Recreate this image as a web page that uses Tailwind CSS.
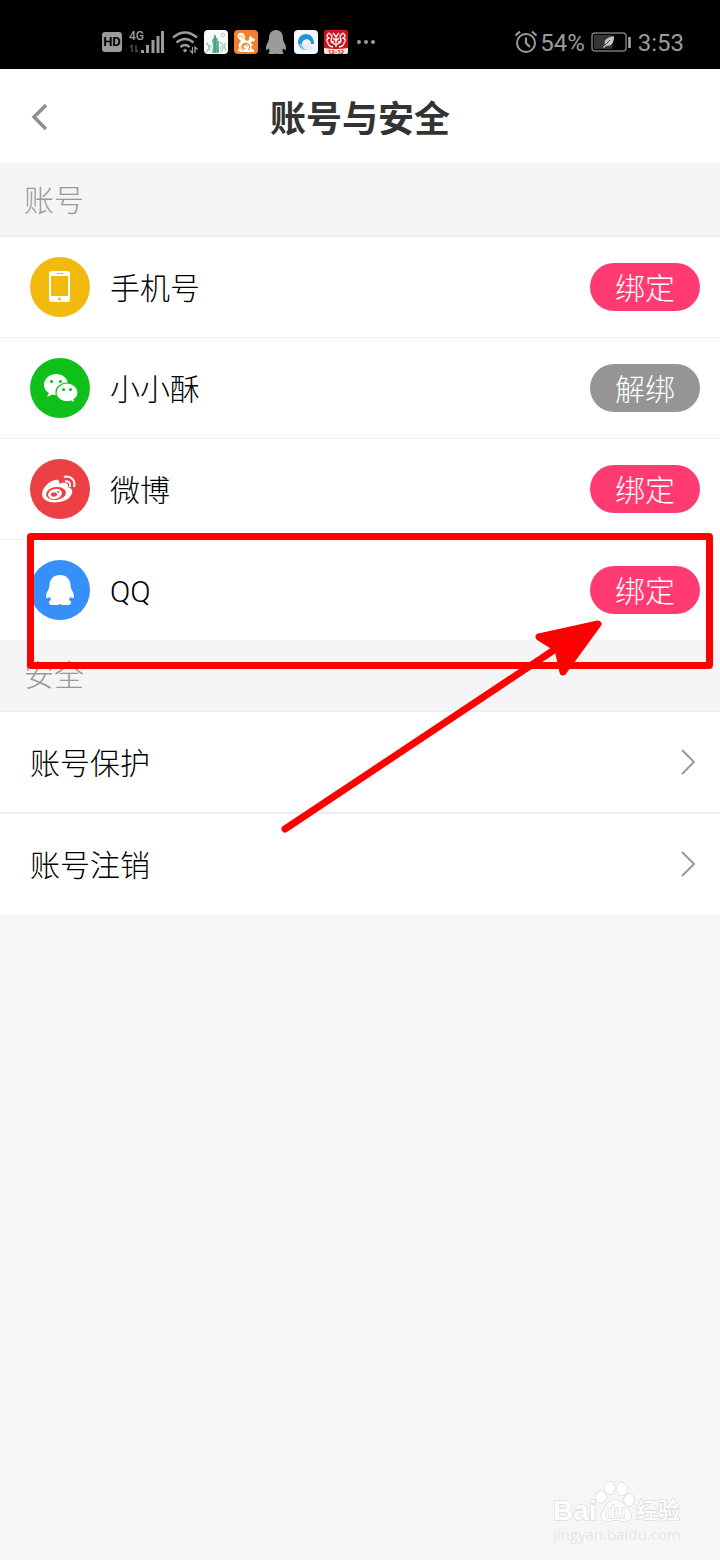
<!DOCTYPE html>
<html lang="zh-CN">
<head>
    <meta charset="utf-8">
    <meta name="viewport" content="width=device-width, initial-scale=1">
    <title>账号与安全</title>
    <script src="https://cdn.jsdelivr.net/npm/@tailwindcss/browser@4"></script>
</head>
<body class="relative min-h-screen bg-[#f6f6f6] font-['Roboto','Noto_Sans_CJK_SC',sans-serif] text-black">
    <!-- status bar -->
    <div class="flex h-[69px] items-center justify-between bg-black pt-[14px] pr-9 pl-[102px] text-[#9b9b9b]">
        <div class="flex items-center gap-[6px]">
            <div class="flex h-5 w-5 items-center justify-center rounded-[3px] bg-[#9b9b9b] text-[13px] font-bold text-black">HD</div>
            <svg class="h-6 w-[38px]" viewBox="0 0 38 24" fill="currentColor">
                <text x="1" y="10" font-size="12" font-weight="500">4G</text>
                <path d="M13 20h3v3h-3zM18 15h3v8h-3zM23.500 10h3v13h-3zM28.500 6h3v17h-3zM33 1h3v22h-3z"/>
                <path d="M4 15v7M2 17l2-2M8 15v7M8 22l2-2" stroke="#4a4a4a" stroke-width="1.500" fill="none"/>
            </svg>
            <svg class="h-6 w-[26px]" viewBox="0 0 26 24" fill="none" stroke="currentColor" stroke-width="2.400">
                <path d="M1 7.500q12-10 24 0M4.500 12.500q8.500-7 17 0M8.500 17q4.500-4 9 0"/>
                <circle cx="13" cy="20.500" r="1.300" fill="currentColor" stroke-width="1"/>
                <path d="M20.500 17v6l-2.500-2.500M23 23v-6l2.500 2.500" stroke-width="1.300"/>
            </svg>
            <svg class="h-6 w-6" viewBox="0 0 24 24">
                <rect width="24" height="24" rx="4" fill="#f8fbf8"/>
                <path d="M8 10l3-4 3 3-1 5 2 9H8l1-7z" fill="#67b592"/>
                <path d="M11 5v18M14 11v11" stroke="#3d9a8c" stroke-width="1.500"/>
                <path d="M2 14l5 2-5 6M3 12l3 9M16 12l3 3-3 4M17 22l5-9M20 16l2 5" stroke="#94cfaf" stroke-width="1.200" fill="none"/>
                <circle cx="19" cy="5" r="1.600" fill="none" stroke="#b4bfa0" stroke-width=".8"/>
            </svg>
            <svg class="h-6 w-6" viewBox="0 0 24 24">
                <rect width="24" height="24" rx="4" fill="#f5802c"/>
                <path d="M3.500 5C5 2 9 2 10.500 5c1 2 0 4 .5 5 1 1 3 1 4 0l.5-3 1-1.500 1 1.500 3 2c1 1 0 2.500-3 2.500l-.5 2 2.500 2-2.500.5 1 3 2 1v2H6.500c-3 0-4-3-1-3.500C4 14 5 13 7 11.500 6 9 3 9 3.500 5z" fill="#fff"/>
                <path d="M14.500 20a4 4 0 1 0-5 .5M13 16.500a2 2 0 1 0-1.500 2" fill="none" stroke="#f5802c" stroke-width="1.100"/>
                <path d="M5 6.500c2-1.500 4 0 4 2" fill="none" stroke="#f5802c"/>
            </svg>
            <svg class="h-6 w-6" viewBox="0 0 24 24" fill="#9b9b9b">
                <path d="M12 0C7 0 5 4 5 8.500 5 12 2 14 2 18c0 2.500 1 2.500 2.500.5L6 21.500c-2 .5-2 2.500 0 2.500h5l1-.5 1 .5h5c2 0 2-2 0-2.500l1.500-3c1.500 2 2.500 2 2.500-.5 0-4-3-6-3-9.500C19 4 17 0 12 0z"/>
            </svg>
            <svg class="h-6 w-6" viewBox="0 0 24 24">
                <rect width="24" height="24" rx="4" fill="#f4f9fe"/>
                <path d="M12 4a8 8 0 0 0-8 8 8 8 0 0 0 9 8c-4-1-6-4-5-7 1-4 6-5 8-2 1 1 1 2 1 3h3c0-6-3-10-8-10z" fill="#2592dc"/>
                <path d="M4.500 14a8 8 0 0 0 9 6c-3-1-5-3-5.500-6z" fill="#7fc4f0"/>
                <path d="M10 19c-2-3 1-6 3-6 4-1 5 2 4 3 3 1 2 4 0 4z" fill="#e2edf6"/>
            </svg>
            <svg class="h-6 w-6" viewBox="0 0 24 24">
                <rect width="24" height="24" rx="2" fill="#cf141b"/>
                <path d="M0 18q12 2 24 0v4q0 2-2 2H2q-2 0-2-2z" fill="#fdebd0"/>
                <g fill="none" stroke="#fff" stroke-width="1.300">
                    <path d="M5 3q-4 3 0 5-4 1-1 5 0 3 5 4M19 3q4 3 0 5 4 1 1 5 0 3-5 4"/>
                    <path d="M5 3l3 3-1 5 3 1M19 3l-3 3 1 5-3 1M9 3l3 4 3-4M9 8l3 3 3-3M12 7v10M7 12l5 3 5-3"/>
                </g>
                <text x="12" y="23.500" font-size="6" font-weight="700" text-anchor="middle" fill="#b32020">12-12</text>
            </svg>
            <svg class="ml-[3px] h-6 w-5" viewBox="0 0 20 24" fill="currentColor">
                <circle cx="2" cy="12" r="2"/><circle cx="9" cy="12" r="2"/><circle cx="16" cy="12" r="2"/>
            </svg>
        </div>
        <div class="flex items-center text-[24px] leading-6">
            <svg class="mr-[2px] h-6 w-6" viewBox="0 0 24 24" fill="none" stroke="currentColor" stroke-width="2">
                <circle cx="12" cy="13" r="9"/>
                <path d="M12 7.500V13l4 4M1.500 5.500l4.500-4M22.500 5.500l-4.500-4" stroke-width="2.200"/>
            </svg>
            <span class="pt-[2px]">54%</span>
            <svg class="mx-[6px] h-5 w-[41px]" viewBox="0 0 41 20">
                <rect x="1" y="1" width="34" height="18" rx="3" fill="none" stroke="#777" stroke-width="1.500"/>
                <rect x="3" y="3" width="18" height="14" fill="#353535"/>
                <path d="M23 4c0 7-2 10-8 10l-2 2-1-1 2-2c-2-6 4-8 9-9z" fill="#c4c4c4"/>
                <path d="M14 13l5-5" stroke="#444"/>
                <path d="M38.500 5v11" stroke="#aaa" stroke-width="2.500"/>
            </svg>
            <span class="pt-[2px]">3:53</span>
        </div>
    </div>

    <header class="grid h-[94px] grid-cols-[80px_1fr_80px] items-center bg-white">
        <button type="button" aria-label="返回" class="flex h-full items-center pl-[30px]">
            <svg class="h-7 w-5" viewBox="0 0 20 28" fill="none" stroke="#8e8e8e" stroke-width="3.500"><path d="M16 3L4 15l12 12"/></svg>
        </button>
        <h1 class="pt-2 text-center text-[36px] leading-[48px] font-bold text-[#333]">账号与安全</h1>
    </header>

    <main>
        <h2 class="h-[74px] border-b-2 border-[#eee] bg-[#f5f5f5] px-6 pt-4 text-[30px] leading-[44px] font-light text-[#999]">账号</h2>
        <ul class="bg-white text-[30px] font-light">
            <li class="flex h-[101px] items-center border-b border-[#eee] pr-5 pl-[30px]">
                <svg class="h-[60px] w-[60px]" viewBox="0 0 60 60">
                    <circle cx="30" cy="30" r="30" fill="#f2b90f"/>
                    <rect x="19" y="14" width="21" height="31" rx="3" fill="#fff"/>
                    <rect x="21" y="19" width="17" height="20" fill="#f2b90f"/>
                    <path d="M27 16.500h6" stroke="#f2b90f"/>
                    <circle cx="29.500" cy="42" r="1.500" fill="#f2b90f"/>
                </svg>
                <span class="ml-5 flex-1 pt-[2px]">手机号</span>
                <button type="button" class="h-12 w-[110px] rounded-full bg-[#ff3b72] pt-1 leading-[44px] text-white">绑定</button>
            </li>
            <li class="flex h-[101px] items-center border-b border-[#eee] pr-5 pl-[30px]">
                <svg class="h-[60px] w-[60px]" viewBox="0 0 60 60">
                    <circle cx="30" cy="30" r="30" fill="#0fc01b"/>
                    <path d="M26 16c-7 0-12 5-12 11 0 4 2 6 5 8l-2 4 5-2.500c9 2 16-2 16-10C38 20 32 16 26 16z" fill="#fff"/>
                    <path d="M37 25c-6 0-11 4-11 9.500 0 6 7 11 15 8.500l4 2.500-1-4c3-2 4-4 4-7 0-5-5-9.500-11-9.500z" fill="#fff" stroke="#0fc01b" stroke-width="1.200"/>
                    <g fill="#0fc01b"><circle cx="21.500" cy="23.500" r="1.600"/><circle cx="30.500" cy="23.500" r="1.600"/><circle cx="33.500" cy="31.500" r="1.500"/><circle cx="40.500" cy="31.500" r="1.500"/></g>
                </svg>
                <span class="ml-5 flex-1 pt-[2px]">小小酥</span>
                <button type="button" class="h-12 w-[110px] rounded-full bg-[#959595] pt-1 leading-[44px] text-white">解绑</button>
            </li>
            <li class="flex h-[101px] items-center border-b border-[#eee] pr-5 pl-[30px]">
                <svg class="h-[60px] w-[60px]" viewBox="0 0 60 60">
                    <circle cx="30" cy="30" r="30" fill="#ed4044"/>
                    <path d="M12 35c0-6 7-13 13-14 4-1 5 2 4 4 4-2 10-2 9 3 7 2 4 8 1 11-6 6-27 7-27-4z" fill="#fff"/>
                    <ellipse cx="26" cy="34.500" rx="10" ry="6.500" fill="#ed4044" transform="rotate(-8 26 34.500)"/>
                    <ellipse cx="25" cy="35" rx="7" ry="5" fill="#fff" transform="rotate(-15 25 35)"/>
                    <ellipse cx="24" cy="35.500" rx="3" ry="2.200" fill="#ed4044"/><circle cx="28" cy="33" r="1" fill="#ed4044"/>
                    <path d="M35 22.500c4-1 6 2 5 5.500M34 18c7-2 12 4 10 10" fill="none" stroke="#fff" stroke-width="2"/>
                </svg>
                <span class="ml-5 flex-1 pt-[2px]">微博</span>
                <button type="button" class="h-12 w-[110px] rounded-full bg-[#ff3b72] pt-1 leading-[44px] text-white">绑定</button>
            </li>
            <li class="flex h-[100px] items-center pr-5 pl-[30px]">
                <svg class="h-[60px] w-[60px]" viewBox="0 0 60 60">
                    <circle cx="30" cy="30" r="30" fill="#378ffa"/>
                    <path d="M30 15c-7 0-10.500 5-10.500 10 0 5-3.500 7-3.500 11 0 3 1.500 2.500 4 1l1 3c-3 1-3 5 1 5h6l2-1 2 1h6c4 0 4-4 1-5l1-3c2.500 1.500 4 2 4-1 0-4-3.500-6-3.500-11 0-5-3.500-10-10.500-10z" fill="#fff"/>
                </svg>
                <span class="ml-5 flex-1 pt-[2px]">QQ</span>
                <button type="button" class="h-12 w-[110px] rounded-full bg-[#ff3b72] pt-1 leading-[44px] text-white">绑定</button>
            </li>
        </ul>

        <h2 class="h-[72px] border-b-2 border-[#eee] bg-[#f5f5f5] px-6 pt-[14px] text-[30px] leading-[44px] font-light text-[#999]">安全</h2>
        <nav class="bg-white text-[30px] font-light">
            <a href="#protect" class="flex h-[102px] items-center justify-between border-b-2 border-[#eee] pr-6 pl-[30px]">
                <span class="pt-[2px]">账号保护</span>
                <svg class="h-7 w-4" viewBox="0 0 16 28" fill="none" stroke="#999" stroke-width="2"><path d="M2 2l12 12L2 26"/></svg>
            </a>
            <a href="#cancel" class="flex h-[100px] items-center justify-between pr-6 pl-[30px]">
                <span class="pt-[2px]">账号注销</span>
                <svg class="h-7 w-4" viewBox="0 0 16 28" fill="none" stroke="#999" stroke-width="2"><path d="M2 2l12 12L2 26"/></svg>
            </a>
        </nav>
    </main>

    <!-- highlight box and arrow over the QQ row -->
    <div class="pointer-events-none absolute top-[533px] right-[7px] left-[27px] h-[136px] rounded-[4px] border-[7px] border-[#f00]"></div>
    <svg class="pointer-events-none absolute top-[610px] right-[110px] h-[230px] w-[340px]" viewBox="0 0 340 230" fill="#f00" stroke="#f00" stroke-linecap="round" stroke-linejoin="round">
        <path d="M15 219L290 36" fill="none" stroke-width="7"/>
        <path d="M328 14L269 27L288 39L293 62z" stroke-width="7"/>
    </svg>

    <!-- watermark -->
    <div class="absolute right-[36px] bottom-4 flex flex-col">
        <svg class="h-[44px] w-[132px]" viewBox="0 0 132 44" fill="#fff" stroke="#dcdcdc" stroke-width="1.500" paint-order="stroke" font-family="Liberation Sans, Noto Sans CJK SC, sans-serif">
            <ellipse cx="49" cy="17" rx="5" ry="6"/><ellipse cx="58" cy="8" rx="5" ry="6.500"/><ellipse cx="70" cy="9" rx="5" ry="6.500"/><ellipse cx="77" cy="20" rx="5" ry="6"/>
            <path d="M63 20c-7 0-9 7-12 11-4 5 0 11 5 10l7-1 8 1c8 1 10-5 6-10-4-5-7-11-14-11z"/>
            <text x="1" y="40" font-size="28" font-weight="700">Bai</text>
            <text x="53" y="38" font-size="18">du</text>
            <text x="84" y="38" font-size="22" font-weight="500">经验</text>
        </svg>
        <div class="px-px font-['Open_Sans'] text-[15px] leading-[20px] text-[#e6e6e6]">jingyan.baidu.com</div>
    </div>
</body>
</html>
